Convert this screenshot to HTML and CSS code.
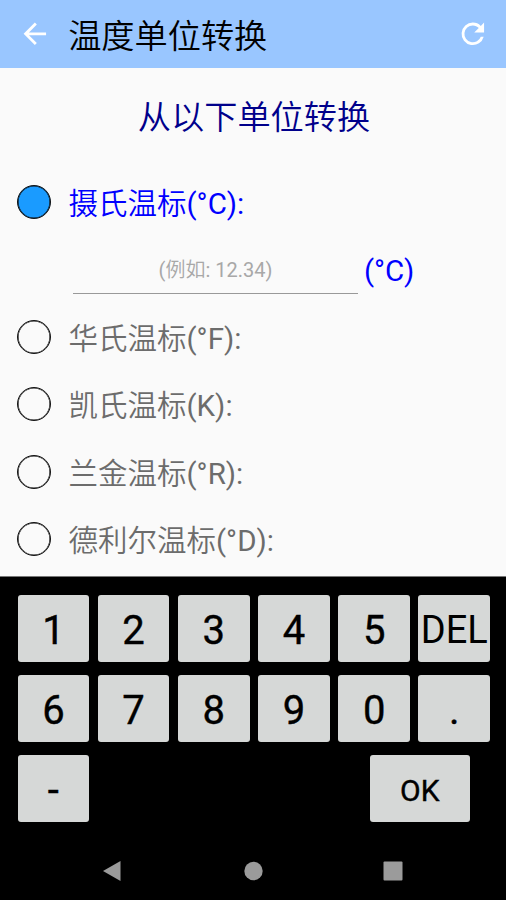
FILE: index.html
```html
<!DOCTYPE html>
<html lang="zh-CN">
<head>
<meta charset="utf-8">
<title>温度单位转换</title>
<link rel="stylesheet" href="styles.css">
</head>
<body>
<header class="bar">
  <svg class="icon" viewBox="0 0 24 24"><path d="M20 11H7.83l5.59-5.59L12 4l-8 8 8 8 1.41-1.41L7.83 13H20z"/></svg>
  <h1 class="title">温度单位转换</h1>
  <svg class="icon" viewBox="0 0 24 24"><path d="M17.65 6.35A7.96 7.96 0 0 0 12 4a8 8 0 1 0 7.73 10h-2.08A6 6 0 1 1 12 6c1.66 0 3.14.69 4.22 1.78L13 11h7V4z"/></svg>
</header>
<main class="content">
  <h2 class="heading">从以下单位转换</h2>
  <div class="row selected"><span class="radio"></span><span class="label">摄氏温标<span class="symbol">(°C):</span></span></div>
  <div class="entry"><div class="field"><span class="symbol">(</span>例如<span class="symbol">: 12.34)</span></div><span class="unit">(°C)</span></div>
  <div class="row"><span class="radio"></span><span class="label">华氏温标<span class="symbol">(°F):</span></span></div>
  <div class="row"><span class="radio"></span><span class="label">凯氏温标<span class="symbol">(K):</span></span></div>
  <div class="row"><span class="radio"></span><span class="label">兰金温标<span class="symbol">(°R):</span></span></div>
  <div class="row"><span class="radio"></span><span class="label">德利尔温标<span class="symbol">(°D):</span></span></div>
</main>
<section class="keypad">
  <div class="keys">
    <button class="key">1</button><button class="key">2</button><button class="key">3</button><button class="key">4</button><button class="key">5</button><button class="key del">DEL</button>
    <button class="key">6</button><button class="key">7</button><button class="key">8</button><button class="key">9</button><button class="key">0</button><button class="key">.</button>
  </div>
  <div class="last"><button class="key minus">-</button><button class="key ok">OK</button></div>
</section>
<nav class="nav">
  <svg viewBox="0 0 20 22"><path d="M1 11 18.5 1v20z"/></svg>
  <svg viewBox="0 0 20 22"><circle cx="10.5" cy="11" r="9.2"/></svg>
  <svg viewBox="0 0 20 22"><rect x=".5" y="1.5" width="19" height="19" rx="1"/></svg>
</nav>
</body>
</html>
```
FILE: styles.css
```css
* { box-sizing: border-box; }
body {
  margin: 0;
  height: 900px;
  display: flex;
  flex-direction: column;
  overflow: hidden;
  background: #fafafa;
  font-family: Roboto, "Noto Sans CJK SC", sans-serif;
}
.bar {
  height: 67.5px;
  flex: none;
  display: flex;
  align-items: center;
  padding: 1px 16px 0 18px;
  background: #99c6ff;
}
.icon { width: 33.7px; height: 33.7px; fill: #fff; flex: none; }
.title {
  flex: 1;
  margin: 0 0 0 16.5px;
  padding-top: 6px;
  font-size: 33.2px;
  line-height: 48px;
  font-weight: 350;
  color: #000;
}
.content { height: 508px; flex: none; }
.heading {
  margin: 0;
  padding: 26px 0 0 2px;
  height: 100.5px;
  font-size: 33.2px;
  line-height: 48px;
  font-weight: 350;
  text-align: center;
  color: #00008b;
}
.row {
  height: 67.5px;
  display: flex;
  align-items: center;
  padding-left: 17px;
  font-size: 29.5px;
  color: #6c6c6c;
}
.radio {
  width: 34px;
  height: 34px;
  border: 1px solid #111;
  border-radius: 50%;
  box-shadow: inset 0 0 0 .6px #111;
}
.label { margin-left: 17.5px; padding-top: 4px; font-weight: 350; line-height: 44px; }
.symbol { font-weight: 400; }
.selected { color: #00f; }
.selected .radio { background: #1a9bff; }
.entry { display: flex; height: 67.5px; padding-left: 73px; }
.field {
  width: 285px;
  height: 58px;
  border-bottom: 1.5px solid #999;
  padding-top: 20px;
  text-align: center;
  font-size: 20px;
  font-weight: 350;
  line-height: 28px;
  color: #a8a8a8;
}
.unit { margin-left: 6px; padding-top: 13px; font-size: 29.5px; font-weight: 400; line-height: 44px; color: #00f; }
.keypad { flex: none; height: 265px; background: #000; border-top: 1px solid #777; padding: 18px 16px 0 17.5px; }
.keys { display: grid; grid-template-columns: repeat(6, 71.8px); gap: 13.5px 8.4px; }
.key {
  height: 67px;
  border: 0;
  border-radius: 3px;
  padding: 5px 0 0;
  background: #d6d8d7;
  color: #000;
  font: 400 40px/62px Roboto, sans-serif;
  -webkit-text-stroke: .4px #000;
  text-align: center;
  white-space: nowrap;
}
.del { font-size: 38px; padding-top: 3px; line-height: 64px; -webkit-text-stroke-width: 0; }
.last { display: flex; justify-content: space-between; padding: 13px 20.5px 0 0; }
.minus { width: 71.8px; }
.ok { width: 99.5px; font-size: 30px; padding-top: 4px; line-height: 63px; }
.nav {
  flex: 1;
  display: flex;
  justify-content: space-between;
  padding: 19px 103px 0 102px;
  background: #000;
}
.nav svg { width: 20px; height: 22px; fill: #9b9b9b; }
```
